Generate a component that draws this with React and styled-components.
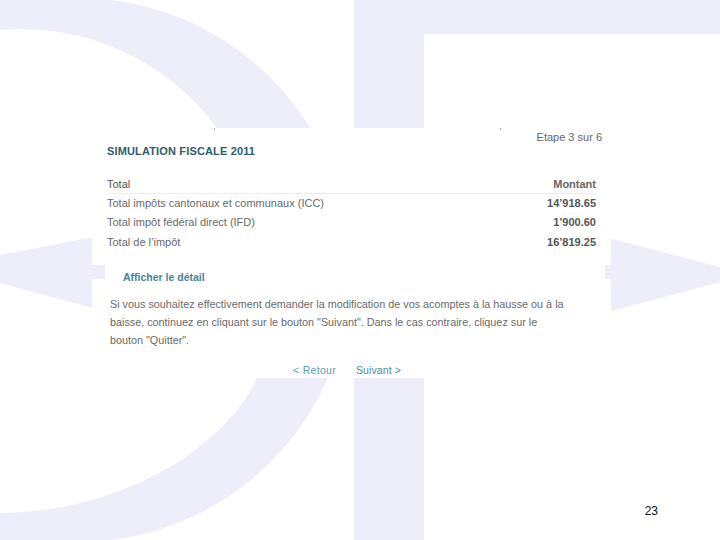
import styled, { createGlobalStyle } from 'styled-components';

const GlobalStyle = createGlobalStyle`
  html, body {
    margin: 0;
    padding: 0;
    background: #fff;
  }
  body {
    font-family: "Liberation Sans", Arial, sans-serif;
  }
`;

const rows = [
  { label: 'Total impôts cantonaux et communaux (ICC)', value: '14’918.65' },
  { label: 'Total impôt fédéral direct (IFD)', value: '1’900.60' },
  { label: 'Total de l’impôt', value: '16’819.25' },
];

const Backdrop = () => (
  <BackdropSvg viewBox="0 0 720 540" width="720" height="540">
    <g fill="#eeeefa">
      <rect x="354" y="0" width="366" height="34" />
      <rect x="354" y="0" width="70" height="540" />
      <path d="M0,0 L111,0 A272,272 0 0 1 111,540 L0,540 L0,513 C130,512 230,440 257,378 L290,270 L217,128 A244,244 0 0 0 0,30 Z" />
      <polygon points="0,255 130,230 130,318 0,283" />
      <polygon points="590,233 720,267 720,282 590,317" />
    </g>
  </BackdropSvg>
);

const App = () => (
  <>
    <GlobalStyle />
    <Slide>
      <Backdrop />
      <Card>
        <TopSection>
          <Specks>
            <Speck />
            <Speck />
          </Specks>
          <StepLabel>Etape 3 sur 6</StepLabel>
          <Title>SIMULATION FISCALE 2011</Title>
          <Table>
            <HeaderRow>
              <span>Total</span>
              <HeadValue>Montant</HeadValue>
            </HeaderRow>
            {rows.map((r) => (
              <Row key={r.label}>
                <span>{r.label}</span>
                <Value>{r.value}</Value>
              </Row>
            ))}
          </Table>
        </TopSection>

        <DetailBar>
          <DetailLink>Afficher le détail</DetailLink>
        </DetailBar>

        <LowerSection>
          <Message>
            Si vous souhaitez effectivement demander la modification de vos acomptes à la hausse ou à la
            <br />
            baisse, continuez en cliquant sur le bouton "Suivant". Dans le cas contraire, cliquez sur le
            <br />
            bouton "Quitter".
          </Message>
          <Nav>
            <NavLink>&lt; Retour</NavLink>
            <NavLink $primary>Suivant &gt;</NavLink>
          </Nav>
        </LowerSection>
      </Card>
      <PageNumber>23</PageNumber>
    </Slide>
  </>
);

const Slide = styled.div`
  position: relative;
  width: 720px;
  height: 540px;
  overflow: hidden;
  background: #fff;
  box-sizing: border-box;
  padding: 128px 62px 22px 92px;
  display: flex;
  flex-direction: column;
`;

const BackdropSvg = styled.svg`
  position: absolute;
  top: 0;
  left: 0;
  z-index: 0;
`;

const Card = styled.div`
  position: relative;
  z-index: 1;
  width: 519px;
`;

const TopSection = styled.div`
  height: 137px;
  background: #fff;
`;

const Specks = styled.div`
  display: flex;
  height: 2px;
  padding-left: 122px;
  gap: 285px;
`;

const Speck = styled.span`
  width: 1px;
  height: 2px;
  background: #aaa;
`;

const StepLabel = styled.div`
  text-align: right;
  padding-right: 9px;
  font-size: 11px;
  line-height: 14px;
  color: #666;
`;

const Title = styled.h1`
  margin: 0;
  padding-left: 15px;
  font-size: 11px;
  font-weight: bold;
  line-height: 15px;
  letter-spacing: 0.15px;
  color: #2f5d6e;
`;

const Table = styled.div`
  margin-top: 15.5px;
  padding: 0 15px;
  font-size: 11px;
  color: #6a6a6a;
`;

const HeaderRow = styled.div`
  display: flex;
  justify-content: space-between;
  height: 18px;
  line-height: 18px;
  border-bottom: 1px solid #ececec;
  color: #555;
`;

const HeadValue = styled.span`
  font-weight: bold;
  color: #666;
`;

const Row = styled.div`
  display: flex;
  justify-content: space-between;
  height: 19.5px;
  line-height: 19.5px;
`;

const Value = styled.span`
  font-weight: bold;
  color: #555;
`;

const DetailBar = styled.div`
  position: relative;
  z-index: 1;
  height: 14px;
  margin: 0 6px 0 13px;
  padding-left: 18px;
  background: #fff;
  display: flex;
  align-items: flex-end;
`;

const DetailLink = styled.span`
  font-size: 10.5px;
  font-weight: bold;
  line-height: 14px;
  margin-bottom: -5px;
  color: #3e8798;
`;

const LowerSection = styled.div`
  height: 99px;
  box-sizing: border-box;
  padding: 16px 0 0 18px;
  background: #fff;
`;

const Message = styled.p`
  margin: 0;
  white-space: nowrap;
  font-size: 10.8px;
  line-height: 18px;
  color: #6a6a6a;
`;

const Nav = styled.div`
  margin-top: 14px;
  display: flex;
  justify-content: center;
  gap: 20px;
  padding-right: 27px;
  font-size: 10.5px;
  line-height: 14px;
`;

const NavLink = styled.span`
  color: ${(p) => (p.$primary ? '#4a8c9c' : '#5c9fae')};
  letter-spacing: ${(p) => (p.$primary ? '0.1px' : '0.3px')};
`;

const PageNumber = styled.div`
  position: relative;
  z-index: 1;
  margin-top: auto;
  text-align: right;
  font-size: 12px;
  line-height: 14px;
  color: #111;
`;

export default App;
